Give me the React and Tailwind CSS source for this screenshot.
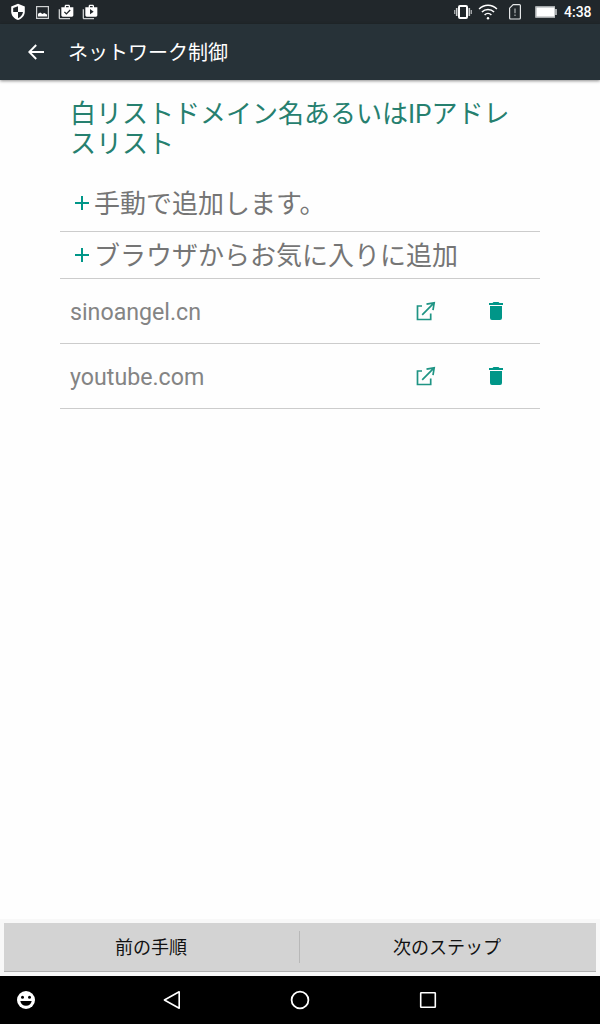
const DOMAINS = ['sinoangel.cn', 'youtube.com'];

const ADD_ROWS = [
  { label: '手動で追加します。',             row: 'h-[57px]',      text: 'pt-px' },
  { label: 'ブラウザからお気に入りに追加', row: 'h-[47px]', text: 'pt-[2px]' },
];

function ShieldIcon() {
  return (
    <svg className="w-4 h-[18px]" viewBox="0 0 16 18" fill="none">
      <path d="M8 .8 14.8 3.6V8.5C14.8 12.5 12 15.8 8 17 4 15.8 1.2 12.5 1.2 8.5V3.6Z" fill="#fff" />
      <path d="M8 3.2V9H3.2V5ZM8 9h5C12.6 11.8 10.6 14.2 8 15.2Z" fill="#21272b" />
    </svg>
  );
}

function ImageIcon() {
  return (
    <svg className="w-[13px] h-[13px]" viewBox="0 0 13 13" fill="none">
      <rect x=".6" y=".6" width="11.8" height="11.8" stroke="#cfd2d3" strokeWidth="1.2" />
      <path d="M2 10.5V7.8l2.2-1.4 2.3 1.5L8.2 7l2.8 1.6v1.9Z" fill="#fff" />
    </svg>
  );
}

function BagIcon({ children }) {
  return (
    <svg className="w-4 h-4" viewBox="0 0 24 24">
      <path d="M3 8H1v13c0 1.1.9 2 2 2h15v-2H3V8z" fill="#c9cccd" />
      <path d="M18 5V3c0-1.1-.9-2-2-2h-4c-1.1 0-2 .9-2 2v2H5v12c0 1.1.9 2 2 2h14c1.1 0 2-.9 2-2V5h-5zm-6-2h4v2h-4V3z" fill="#fff" />
      {children}
    </svg>
  );
}

function VibrateIcon() {
  return (
    <svg className="w-[18px] h-4" viewBox="0 0 18 16" fill="none">
      <rect x="5" y="2" width="8" height="12" rx="1" stroke="#fff" strokeWidth="2" />
      <path d="M.7 6v4M17.3 6v4" stroke="#a9adaf" strokeWidth="1.3" />
      <path d="M2.7 4v8M15.3 4v8" stroke="#c9cccd" strokeWidth="1.6" />
    </svg>
  );
}

function WifiIcon() {
  return (
    <svg className="w-5 h-[18px]" viewBox="0 0 20 18" fill="none" stroke="#fff" strokeWidth="1.5">
      <path d="M1.1 6C6 .9 14 .9 18.9 6M3.9 9C7.3 5.5 12.7 5.5 16.1 9M6.6 12c1.9-1.9 4.9-1.9 6.8 0" />
      <circle cx="10" cy="15.2" r="1.2" fill="#fff" stroke="none" />
    </svg>
  );
}

function SimIcon() {
  return (
    <svg className="w-3 h-4" viewBox="0 0 12 16" fill="none">
      <path d="M4.2 .6H10.4a1 1 0 0 1 1 1v12.4a1 1 0 0 1-1 1H1.6a1 1 0 0 1-1-1V4.2Z" stroke="#e4e6e7" strokeWidth="1.2" />
      <path d="M6 4.5v4.7M6 10.5v1.5" stroke="#a4a8aa" strokeWidth="1.3" />
    </svg>
  );
}

function BatteryIcon() {
  return (
    <svg className="w-[22px] h-3" viewBox="0 0 22 12">
      <path d="M1 0h19v3h2v6h-2v3H1a1 1 0 0 1-1-1V1a1 1 0 0 1 1-1Z" fill="#a5a9ab" />
      <rect x="1.5" y="1.5" width="18" height="9" fill="#fff" />
    </svg>
  );
}

function StatusBar() {
  return (
    <div className="h-6 bg-[#21272b] flex items-center justify-between pl-[10px] pr-2">
      <div className="flex items-center">
        <ShieldIcon />
        <div className="ml-[10px]"><ImageIcon /></div>
        <div className="ml-[9px]">
          <BagIcon>
            <path d="m9.6 11.8 3 3 5.7-5.7" fill="none" stroke="#21272b" strokeWidth="2" />
          </BagIcon>
        </div>
        <div className="ml-2">
          <BagIcon>
            <path d="M12 15.5v-8l5.5 4z" fill="#21272b" />
          </BagIcon>
        </div>
      </div>
      <div className="flex items-center">
        <VibrateIcon />
        <div className="ml-[6px]"><WifiIcon /></div>
        <div className="ml-[11px]"><SimIcon /></div>
        <div className="ml-[14px]"><BatteryIcon /></div>
        <span className="ml-[7px] w-7 text-[14px] leading-6 font-medium text-white whitespace-nowrap">4:38</span>
      </div>
    </div>
  );
}

function OpenIcon() {
  return (
    <svg className="w-5 h-5" viewBox="0 0 20 20" fill="none" stroke="#1f9484" strokeWidth="1.7">
      <path d="M6 5H1.5v13.5h13.2V12.5" />
      <path d="M6.2 13.8 17.3 2.7M10.5 3.2l7.7-1.4L17 9.2" />
    </svg>
  );
}

function TrashIcon() {
  return (
    <svg className="w-[14px] h-[18px]" viewBox="0 0 14 18" fill="#009688">
      <path d="M1 16a2 2 0 0 0 2 2h8a2 2 0 0 0 2-2V4H1ZM14 1h-3.5l-1-1h-5l-1 1H0v2h14Z" />
    </svg>
  );
}

function NavBar() {
  return (
    <nav className="h-12 bg-black flex items-center">
      <svg className="w-[18px] h-[18px] ml-[17px]" viewBox="0 0 18 18">
        <circle cx="9" cy="9" r="9" fill="#fff" />
        <circle cx="5.5" cy="6.3" r="1.5" />
        <circle cx="12.5" cy="6.3" r="1.5" />
        <path d="M3.3 10h11.4a5.8 5.8 0 0 1-11.4 0Z" />
      </svg>
      <svg className="w-5 h-5 ml-[127px]" viewBox="0 0 20 20" fill="none" stroke="#fff" strokeWidth="1.6" strokeLinejoin="round">
        <path d="M17.2 1.8v16.4L2.4 10Z" />
      </svg>
      <svg className="w-5 h-5 ml-[108px]" viewBox="0 0 20 20" fill="none" stroke="#fff" strokeWidth="1.8">
        <circle cx="10" cy="10" r="8.4" />
      </svg>
      <svg className="w-5 h-5 ml-[108px]" viewBox="0 0 20 20" fill="none" stroke="#fff" strokeWidth="1.6">
        <rect x="2.7" y="2.7" width="14.6" height="14.6" rx=".5" />
      </svg>
    </nav>
  );
}

export default function App() {
  return (
    <div className="w-[600px] h-[1024px] bg-[#fefefe] flex flex-col overflow-hidden font-[Roboto,'Noto_Sans_CJK_JP',sans-serif]">
      <StatusBar />

      {/* App bar */}
      <header className="h-14 shrink-0 bg-[#273238] flex items-center pl-7 shadow-[0_1px_3px_rgba(0,0,0,0.45)]">
        <svg className="w-4 h-4" viewBox="0 0 16 16" fill="none" stroke="#fff" strokeWidth="1.9">
          <path d="M16 8H1.5M8.2 1 1.3 8l6.9 7" />
        </svg>
        <h1 className="ml-6 pt-[2px] text-[20px] leading-7 text-white">ネットワーク制御</h1>
      </header>

      {/* Whitelist */}
      <main className="flex-1 px-[60px]">
        <h2 className="h-[95px] pt-[19px] px-[10px] text-[26px] leading-[30px] text-[#26806f]">
          白リストドメイン名あるいはIPアドレスリスト
        </h2>
        {ADD_ROWS.map(r => (
          <div key={r.label} className={`${r.row} flex items-center pl-[15px] border-b border-[#cccccc]`}>
            <svg className="w-[14px] h-[14px]" viewBox="0 0 14 14" stroke="#009688" strokeWidth="2">
              <path d="M7 0v14M0 7h14" />
            </svg>
            <span className={`${r.text} ml-[5px] text-[26px] leading-[30px] text-[#757575]`}>{r.label}</span>
          </div>
        ))}
        {DOMAINS.map(d => (
          <div key={d} className="h-[65px] flex items-center pl-[10px] pr-[37px] border-b border-[#cccccc]">
            <span className="flex-1 pt-[2px] text-[23.2px] leading-8 text-[#848484]">{d}</span>
            <OpenIcon />
            <div className="ml-[53px]"><TrashIcon /></div>
          </div>
        ))}
      </main>

      {/* Steps */}
      <footer className="h-[57px] bg-[#f8f8f8] px-1 pt-1">
        <div className="h-[49px] bg-[#d3d3d3] border-b border-[#b0b0b0] flex items-center text-[18px] text-[#111111]">
          <button className="w-[295px] h-full pr-px text-center">前の手順</button>
          <div className="w-px h-8 bg-[#b8b8b8]" />
          <button className="flex-1 h-full pr-[2px] text-center">次のステップ</button>
        </div>
      </footer>

      <NavBar />
    </div>
  );
}
